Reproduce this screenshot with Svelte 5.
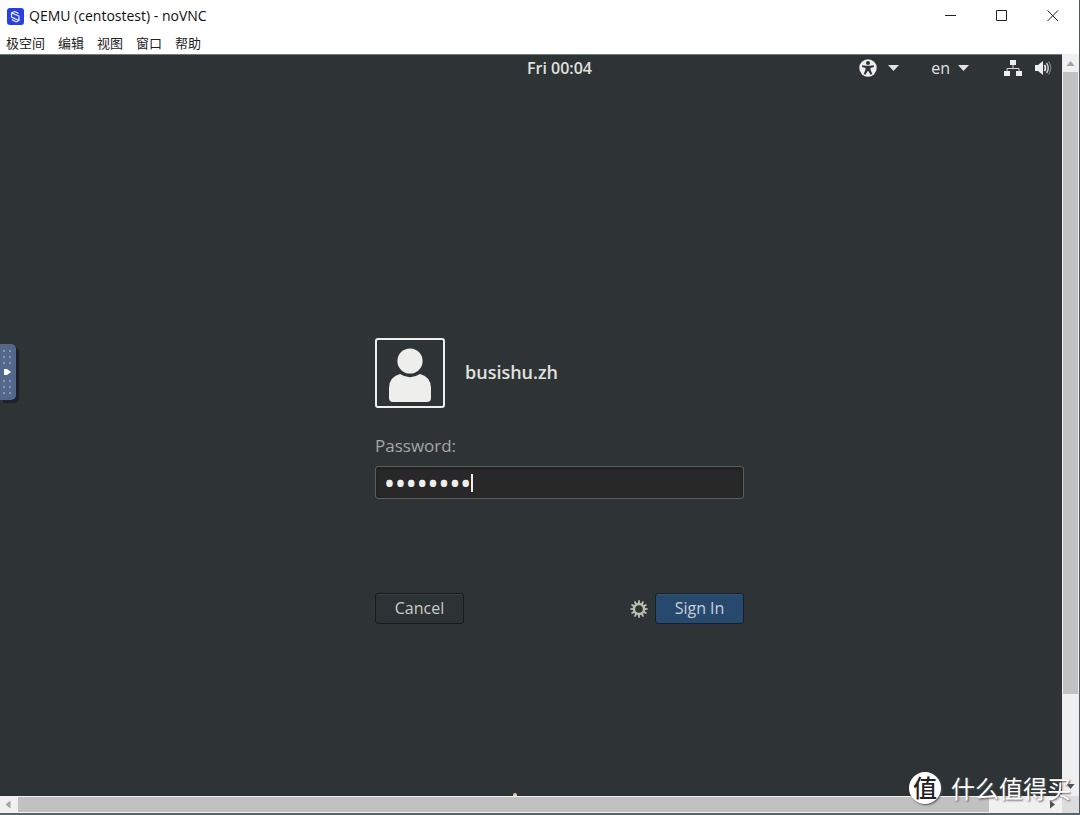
<script>
    let menus = ["极空间", "编辑", "视图", "窗口", "帮助"];
    let username = "busishu.zh";
    let password = "password";
    let teeth = Array.from({ length: 12 }, (_, i) => i * 30);
    let gripRows = [0, 1, 2];
</script>

<div class="window">
    <header class="titlebar">
        <svg class="logo" viewBox="0 0 17 17" aria-hidden="true">
            <rect width="17" height="17" rx="3" fill="#2b3fe0" />
            <path d="M11.500 5.300 7.800 3.500 4.500 4.800v4.400l7.500 3.300V8L5 5.200" fill="none" stroke="#dfe5ff" stroke-width="1.300" stroke-linejoin="round" />
            <path d="M5 11.600l4 2.200 3-1.300" fill="none" stroke="#dfe5ff" stroke-width="1.300" stroke-linejoin="round" />
        </svg>
        <span class="title">QEMU (centostest) - noVNC</span>
        <div class="controls">
            <button aria-label="Minimize">
                <svg width="12" height="12" viewBox="0 0 12 12"><path d="M0 5.500h11" /></svg>
            </button>
            <button aria-label="Maximize">
                <svg width="12" height="12" viewBox="0 0 12 12"><path d="M.5 .5h10v10H.5z" /></svg>
            </button>
            <button aria-label="Close">
                <svg width="12" height="12" viewBox="0 0 12 12"><path d="M.5 .5l10.500 10.500M11 .5 .5 11" /></svg>
            </button>
        </div>
    </header>

    <nav class="menubar">
        {#each menus as menu}
            <button>{menu}</button>
        {/each}
    </nav>

    <div class="view">
        <main class="viewport">
            <div class="screen">
                <div class="topbar">
                    <span class="clock">Fri 00:04</span>
                    <div class="status">
                        <button class="access" aria-label="Accessibility">
                            <svg width="18" height="18" viewBox="0 0 18 18">
                                <circle cx="9" cy="9" r="8.700" fill="#eeeeec" />
                                <circle cx="9" cy="4" r="2" fill="#2e3436" />
                                <path d="M3.200 6.200l4 .5h3.600l4-.5.2 1.700-3.500 1v1.800l1.800 4.400-1.700.7L9.300 12h-.6l-2.300 3.800-1.700-.7 1.800-4.400V8.900l-3.500-1z" fill="#2e3436" />
                            </svg>
                            <svg width="11" height="6" viewBox="0 0 11 6"><path d="M0 0h11L5.500 6z" fill="#e2e2e0" /></svg>
                        </button>
                        <button class="lang">
                            en
                            <svg width="11" height="6" viewBox="0 0 11 6"><path d="M0 0h11L5.500 6z" fill="#e2e2e0" /></svg>
                        </button>
                        <button class="system" aria-label="System menu">
                            <svg width="18" height="18" viewBox="0 0 18 18" fill="#eeeeec">
                                <path d="M6 1h6v5H6zM0 12h6v5H0zM12 12h6v5h-6z" />
                                <path d="M9 6v3M3 12V9.500h12V12" fill="none" stroke="#d3d7cf" />
                            </svg>
                            <svg width="17" height="16" viewBox="0 0 17 16">
                                <path d="M0 5h3l5-4v14l-5-4H0z" fill="#eeeeec" />
                                <path d="M9.500 5q2 3 0 6" fill="none" stroke="#eeeeec" stroke-width="1.600" />
                                <path d="M11.500 3q3.500 5 0 10" fill="none" stroke="#c8cac8" stroke-width="1.500" />
                                <path d="M13.500 1.500q4.500 6.500 0 13" fill="none" stroke="#777b7b" stroke-width="1.300" />
                            </svg>
                        </button>
                    </div>
                </div>

                <form class="login" onsubmit={(e) => e.preventDefault()}>
                    <div class="user">
                        <svg class="avatar" viewBox="0 0 70 70" aria-hidden="true">
                            <rect x="1" y="1" width="68" height="68" rx="2" fill="none" stroke="#eeeeec" stroke-width="2" />
                            <circle cx="35" cy="23" r="12.600" fill="#eeeeec" />
                            <path d="M25 36q10 6.500 20 0 11 3 11 14v10q0 4-4 4H18q-4 0-4-4V50q0-11 11-14z" fill="#eeeeec" />
                        </svg>
                        <span class="name">{username}</span>
                    </div>
                    <label for="password">Password:</label>
                    <div class="field">
                        <input id="password" type="password" bind:value={password} />
                        <span class="cursor"></span>
                    </div>
                    <div class="actions">
                        <button type="button" class="btn">Cancel</button>
                        <button type="button" class="gear" aria-label="Session">
                            <svg width="18" height="18" viewBox="-9 -9 18 18">
                                <circle r="5" fill="none" stroke="#babdb0" stroke-width="2.400" />
                                {#each teeth as angle}
                                    <path d="M-.8-8.700h1.600l.3 3.200h-2.200z" fill="#babdb0" transform="rotate({angle})" />
                                {/each}
                            </svg>
                        </button>
                        <button type="submit" class="btn primary">Sign In</button>
                    </div>
                </form>
            </div>

            <button class="handle" aria-label="Show control bar">
                <svg width="16" height="56" viewBox="0 0 16 56">
                    {#each gripRows as row}
                        <path d="M3 {6 + row * 6}h2v2H3zM9 {6 + row * 6}h2v2H9zM3 {36 + row * 6}h2v2H3zM9 {36 + row * 6}h2v2H9z" fill="#8397b4" />
                    {/each}
                    <path d="M4 25h3l4 3-4 3H4z" fill="#fff" />
                </svg>
            </button>
            <span class="pointer"></span>
        </main>

        <div class="scroll vertical">
            <svg width="17" height="17" viewBox="0 0 17 17"><path d="M4.500 12h8l-4-5z" fill="#a3a3a3" /></svg>
            <div class="thumb"></div>
            <div class="rest"></div>
            <svg width="17" height="17" viewBox="0 0 17 17"><path d="M4.500 5h8l-4 5z" fill="#505050" /></svg>
        </div>
        <div class="scroll horizontal">
            <svg width="17" height="17" viewBox="0 0 17 17"><path d="M10.500 4.500v8l-5-4z" fill="#a3a3a3" /></svg>
            <div class="thumb"></div>
            <div class="rest"></div>
            <svg width="17" height="17" viewBox="0 0 17 17"><path d="M5 4.500v8l5-4z" fill="#505050" /></svg>
        </div>
        <div class="corner"></div>
    </div>

    <div class="watermark">
        <span class="badge">值</span>
        <span>什么值得买</span>
    </div>
</div>

<style>
    :global(body) {
        background: #fff;
    }

    .window {
        position: relative;
        box-sizing: border-box;
        display: flex;
        flex-direction: column;
        min-height: 100vh;
        border-right: 1px solid #4c5a60;
        border-bottom: 2px solid #56666a;
        overflow: hidden;
        font-family: "Open Sans", "Noto Sans CJK SC", sans-serif;
    }

    button {
        padding: 0;
        border: 0;
        background: none;
        color: inherit;
        font: inherit;
    }

    svg {
        display: block;
        flex: none;
    }

    .titlebar {
        display: flex;
        align-items: center;
        height: 32px;
        padding-left: 7px;
        color: #111;
        font-size: 14px;
    }

    .logo {
        width: 17px;
        height: 17px;
        margin-right: 5px;
    }

    .title {
        padding-bottom: 2px;
    }

    .controls {
        display: flex;
        margin-left: auto;
        margin-right: 1px;
    }

    .controls button {
        display: flex;
        align-items: center;
        justify-content: center;
        width: 51px;
        height: 32px;
    }

    .controls path {
        fill: none;
        stroke: #222;
    }

    .menubar {
        display: flex;
        gap: 13px;
        height: 22px;
        padding-left: 6px;
        color: #222;
        font-family: "Noto Sans CJK SC", sans-serif;
        font-size: 13px;
        line-height: 22px;
    }

    .view {
        flex: 1;
        display: grid;
        grid-template-columns: 1fr 17px;
        grid-template-rows: 1fr 17px;
    }

    .viewport {
        position: relative;
        overflow: hidden;
        min-width: 0;
        border-top: 1px solid #747a7c;
        background: #2e3436;
        color: #e0e1df;
    }

    /* the remote desktop is wider than the visible area */
    .screen {
        width: calc(100% + 57px);
    }

    .topbar {
        display: grid;
        grid-template-columns: 1fr auto 1fr;
        align-items: center;
        height: 26px;
        font-size: 16px;
        line-height: 26px;
    }

    .clock {
        grid-column: 2;
        font-weight: 600;
    }

    .status {
        display: flex;
        align-items: center;
        justify-content: flex-end;
        padding-right: 67px;
    }

    .status button {
        display: flex;
        align-items: center;
    }

    .access {
        gap: 11px;
        margin-right: 32px;
    }

    .lang {
        gap: 8px;
        margin-right: 35px;
        font-weight: 500;
    }

    .system {
        gap: 13px;
    }

    .login {
        width: 369px;
        margin: 257px auto 0;
    }

    .user {
        display: flex;
        align-items: center;
        gap: 20px;
    }

    .avatar {
        width: 70px;
        height: 70px;
    }

    .name {
        padding-bottom: 2px;
        font-size: 18px;
        font-weight: 600;
        line-height: 24px;
    }

    label {
        display: block;
        margin: 26px 0 8px;
        color: #a5a7a1;
        font-size: 17px;
        line-height: 24px;
    }

    .field {
        position: relative;
    }

    input {
        display: block;
        box-sizing: border-box;
        width: 100%;
        height: 33px;
        padding: 0 8px;
        border: 1px solid #5c5f5c;
        border-radius: 3px;
        outline: none;
        background: #282828;
        color: #eeeeec;
        font-family: "Noto Sans", sans-serif;
        font-size: 29px;
        line-height: 31px;
        box-shadow: inset 0 2px 3px #202020;
    }

    .cursor {
        position: absolute;
        top: 8px;
        left: 96px;
        width: 2px;
        height: 18px;
        background: #eeeeec;
    }

    .actions {
        display: flex;
        align-items: center;
        margin-top: 94px;
    }

    .btn {
        box-sizing: border-box;
        width: 89px;
        height: 31px;
        padding-bottom: 2px;
        border: 1px solid #171b1c;
        border-radius: 3px;
        background: #2d3335;
        color: #c9cbc8;
        font-size: 16px;
        line-height: 26px;
        box-shadow: inset 0 1px #3c4244;
    }

    .primary {
        border-color: #14202c;
        background: #28496e;
        color: #c7d0d9;
        box-shadow: inset 0 1px #37516b;
    }

    .gear {
        margin-left: auto;
        margin-right: 7px;
    }

    .handle {
        position: absolute;
        top: 289px;
        left: 0;
        border-radius: 0 5px 5px 0;
        background: #52678a;
        box-shadow: 3px 3px 1px #1d2224;
    }

    .pointer {
        position: absolute;
        bottom: 0;
        left: 513px;
        width: 4px;
        height: 3px;
        border-radius: 2px 2px 0 0;
        background: #d8cdb8;
    }

    .scroll {
        display: flex;
        background: #f0f0f0;
    }

    .thumb {
        background: #c1c1c1;
    }

    .vertical {
        flex-direction: column;
    }

    .vertical .thumb {
        flex: 88;
        margin: 1px 1px 0;
    }

    .vertical .rest {
        flex: 12;
    }

    .horizontal .thumb {
        flex: 945;
        margin: 1px 0 1px 1px;
    }

    .horizontal .rest {
        flex: 55;
    }

    .corner {
        background: #dcdcdc;
    }

    .watermark {
        position: absolute;
        right: 8px;
        bottom: 9px;
        display: flex;
        align-items: center;
        gap: 10px;
        color: #fff;
        font-family: "Noto Sans CJK SC", sans-serif;
        font-size: 24px;
        line-height: 30px;
        text-shadow: 1px 1px 2px #555;
        pointer-events: none;
    }

    .badge {
        width: 32px;
        height: 32px;
        border-radius: 50%;
        background: #fff;
        color: #222;
        font-weight: 500;
        text-align: center;
        text-shadow: none;
        box-shadow: 1px 1px 2px #555;
    }
</style>
